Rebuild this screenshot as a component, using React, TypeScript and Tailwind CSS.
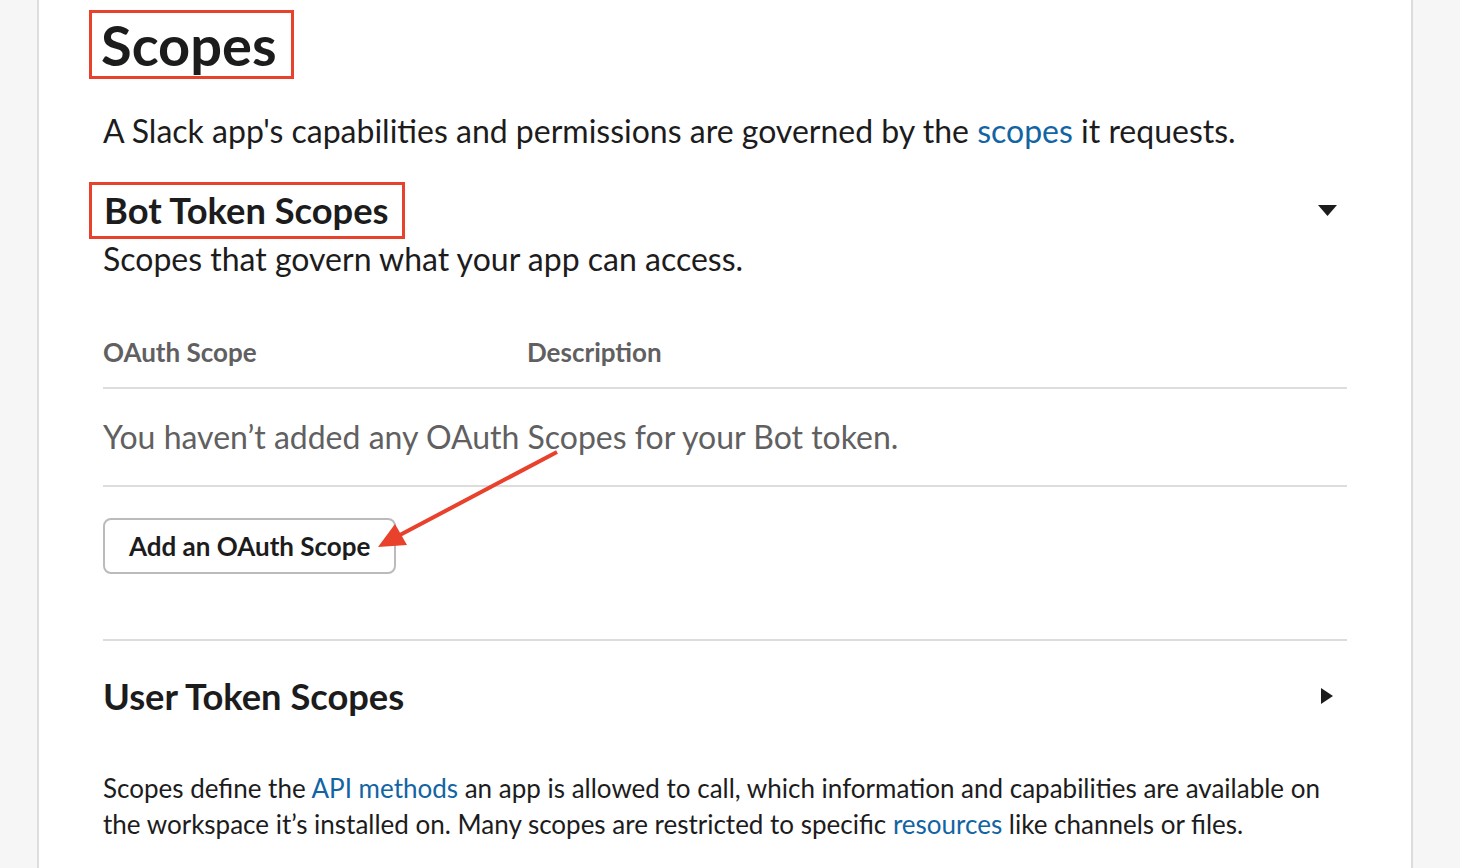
const Caret = ({ dir }: { dir: "down" | "right" }) => (
  <div className="flex w-[40px] justify-center">
    {dir === "down" ? (
      <svg width="19" height="11" viewBox="0 0 19 11">
        <polygon points="0,0 19,0 9.5,11" fill="#1d1c1d" />
      </svg>
    ) : (
      <svg width="12" height="16" viewBox="0 0 12 16">
        <polygon points="0,0 12,8 0,16" fill="#1d1c1d" />
      </svg>
    )}
  </div>
);

export default function App() {
  return (
    <div className="relative h-[868px] w-[1460px] overflow-hidden bg-[#f6f6f6] font-['Lato',sans-serif] text-[#1d1c1d]">
      <div className="ml-[37px] h-full w-[1376px] border-x-2 border-[#dddddd] bg-white px-[64px] pt-[10px]">
        {/* page title */}
        <div>
          <h1 className="-ml-[14px] inline-block border-[3px] border-[#e8412c] pl-[9px] pr-[14px] text-[56px] font-bold leading-[63px]">
            Scopes
          </h1>
        </div>
        <p className="mt-[32px] text-[32px] leading-[40px]">
          A Slack app's capabilities and permissions are governed by the{" "}
          <a className="text-[#1264a3]">scopes</a> it requests.
        </p>

        {/* bot token scopes */}
        <div className="border-b-2 border-[#dddddd] pb-[65px]">
          <div className="mt-[31px] flex items-center justify-between">
            <h2 className="-ml-[14px] inline-block border-[3px] border-[#e8412c] pl-[12px] pr-[13px] text-[36.3px] font-bold leading-[51px]">
              Bot Token Scopes
            </h2>
            <Caret dir="down" />
          </div>
          <p className="mt-[2px] text-[32px] leading-[36px]">Scopes that govern what your app can access.</p>

          <div className="mt-[57px] flex border-b-2 border-[#dddddd] pb-[17px] text-[26px] font-bold leading-[36px] text-[#616061]">
            <div className="w-[424px]">OAuth Scope</div>
            <div>Description</div>
          </div>
          <div className="border-b-2 border-[#dddddd] pb-[30px] pt-[30px] text-[32px] leading-[36px] text-[#616061]">
            You haven’t added any OAuth Scopes for your Bot token.
          </div>
          <button className="mt-[31px] h-[56px] rounded-[8px] border-2 border-[#bbbbbb] bg-white px-[24px] text-[26px] font-bold">
            Add an OAuth Scope
          </button>
        </div>

        {/* user token scopes */}
        <div className="mt-[35px] flex items-center justify-between">
          <h2 className="text-[36.3px] font-bold leading-[40px]">User Token Scopes</h2>
          <Caret dir="right" />
        </div>
        <p className="mt-[54px] text-[26px] leading-[36px]">
          Scopes define the <a className="text-[#1264a3]">API methods</a> an app is allowed to call, which
          information and capabilities are available on the workspace it’s installed on. Many scopes are
          restricted to specific <a className="text-[#1264a3]">resources</a> like channels or files.
        </p>
      </div>

      {/* annotation arrow */}
      <svg className="pointer-events-none absolute left-0 top-0" width="1460" height="868">
        <line x1="557" y1="452" x2="398" y2="536" stroke="#e8412c" strokeWidth="4" />
        <polygon points="378,547 395,524 407,545" fill="#e8412c" />
      </svg>
    </div>
  );
}
